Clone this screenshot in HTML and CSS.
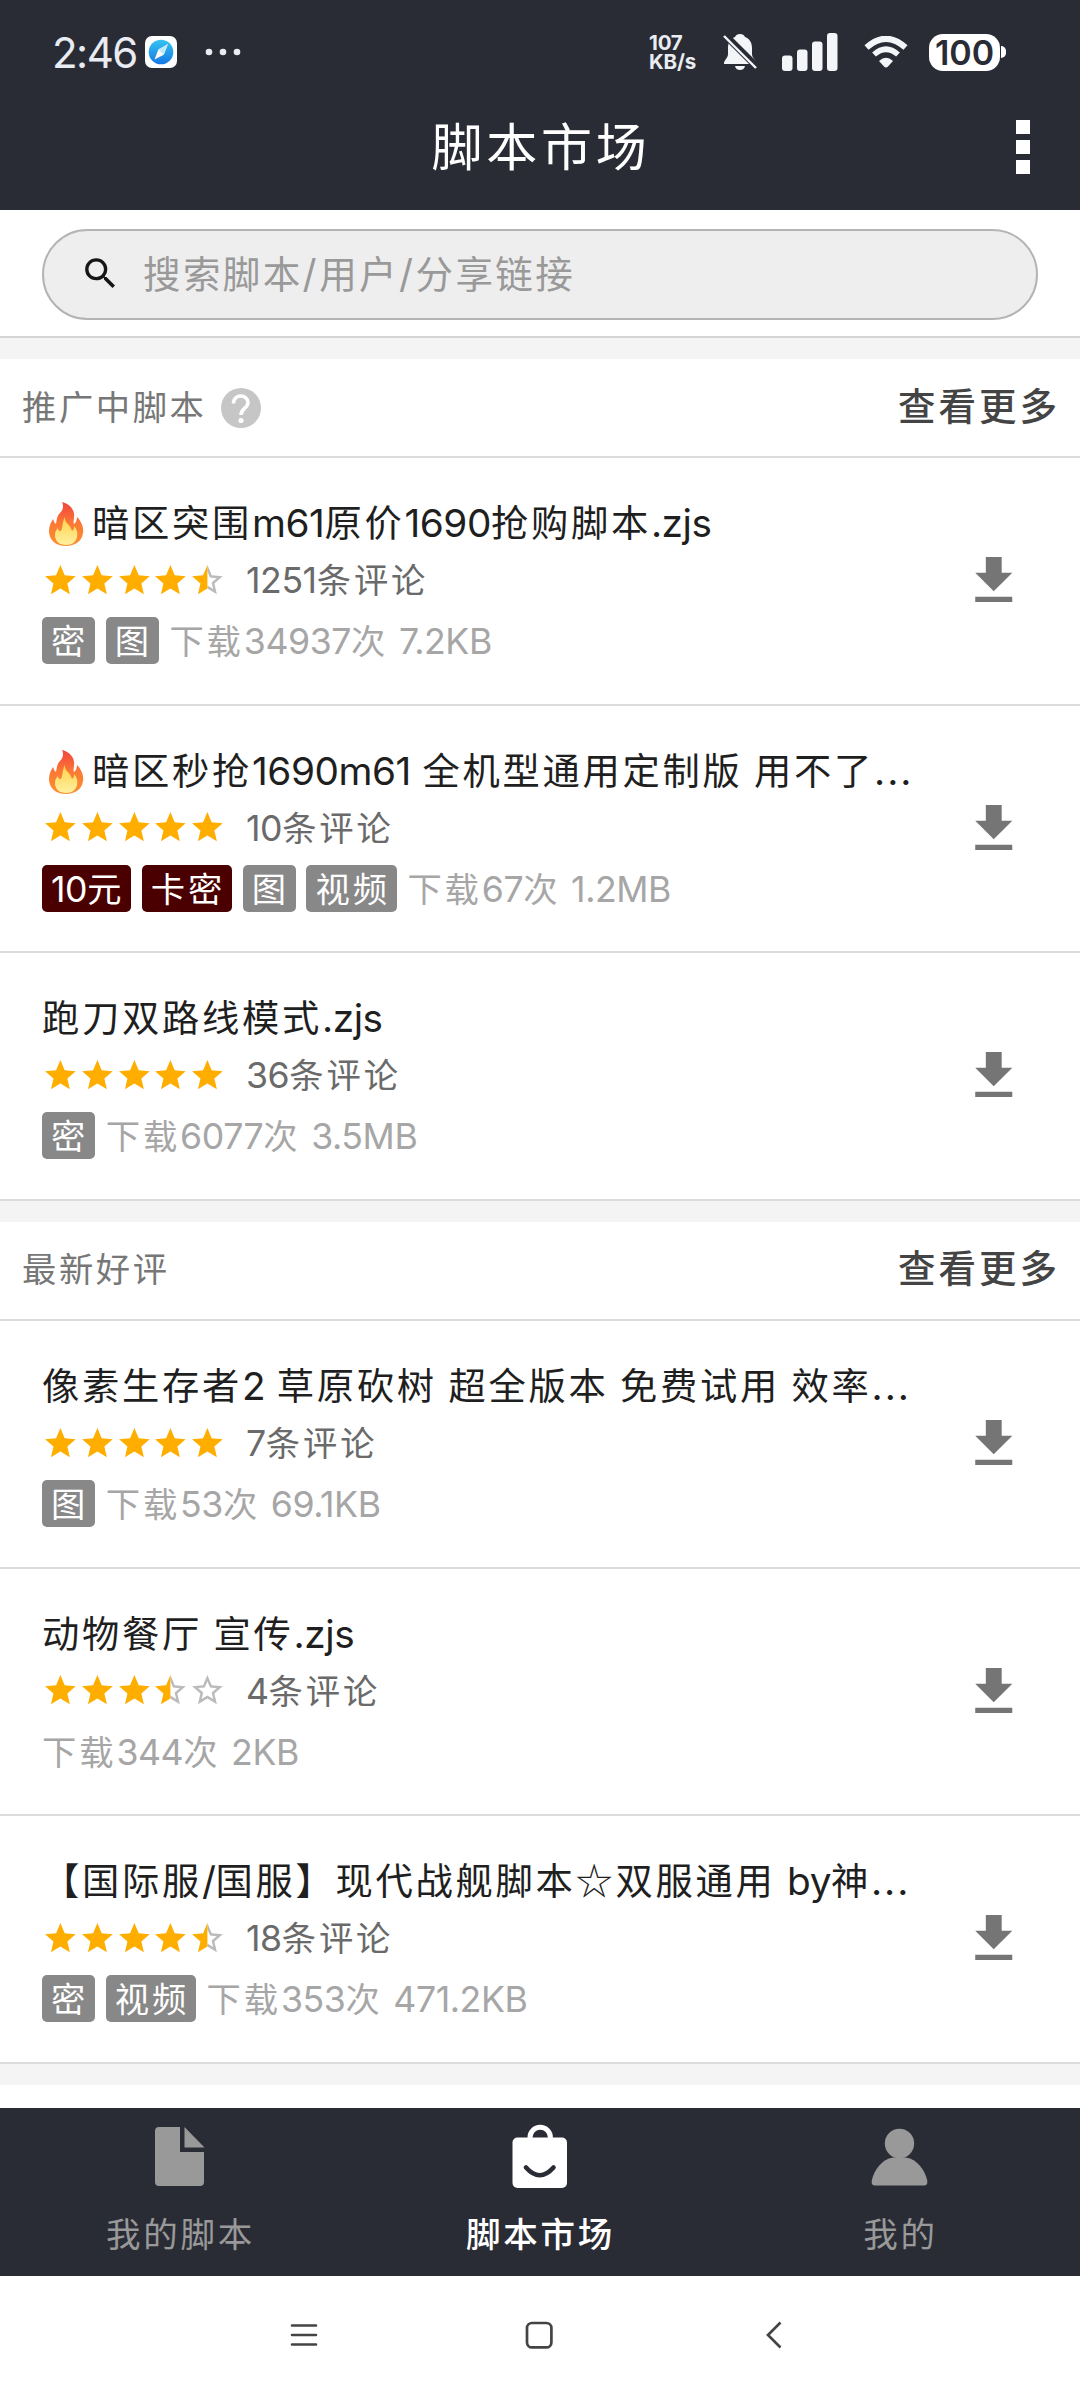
FILE: index.html
```html
<!DOCTYPE html>
<html lang="zh-CN">
<head>
<meta charset="utf-8">
<title>脚本市场</title>
<link rel="stylesheet" href="styles.css">
</head>
<body>
<svg width="0" height="0" class="defs">
  <defs>
    <symbol id="star" viewBox="0 0 24 24"><path d="M12 17.27 18.18 21l-1.64-7.03L22 9.24l-7.19-.61L12 2 9.19 8.63 2 9.24l5.46 4.73L5.82 21z" fill="#ffae00"/></symbol>
    <symbol id="star-empty" viewBox="0 0 24 24"><path d="M22 9.24l-7.19-.62L12 2 9.19 8.63 2 9.24l5.46 4.73L5.82 21 12 17.27 18.18 21l-1.63-7.03L22 9.24zM12 15.4l-3.76 2.27 1-4.28-3.32-2.88 4.38-.38L12 6.1l1.71 4.04 4.38.38-3.32 2.88 1 4.28L12 15.4z" fill="#bbb"/></symbol>
    <symbol id="star-half" viewBox="0 0 24 24"><path d="M22 9.24l-7.19-.62L12 2V6.1l1.71 4.04 4.38.38-3.32 2.88 1 4.28L12 15.4v1.87L18.18 21l-1.63-7.03L22 9.24z" fill="#bbb"/><path d="M12 17.27V2L9.19 8.63 2 9.24l5.46 4.73L5.82 21z" fill="#ffae00"/></symbol>
    <symbol id="download" viewBox="0 0 24 24"><path d="M19 9h-4V3H9v6H5l7 7 7-7zM5 18v2h14v-2H5z" fill="#757575"/></symbol>
    <linearGradient id="flame" x1="0" y1="0" x2="0" y2="1"><stop offset="0" stop-color="#f2443c"/><stop offset=".5" stop-color="#fb7a34"/><stop offset="1" stop-color="#f9902f"/></linearGradient>
    <linearGradient id="core" x1="0" y1="0" x2="0" y2="1"><stop offset="0" stop-color="#ffd34a"/><stop offset="1" stop-color="#fff0a0"/></linearGradient>
    <linearGradient id="sky" x1="0" y1="0" x2="0" y2="1"><stop offset="0" stop-color="#35c4f0"/><stop offset="1" stop-color="#1478e6"/></linearGradient>
    <symbol id="fire" viewBox="0 0 36 44"><path d="M14 0C22 2 27 8 26 15C26 18 25 20 26 22C28 21 29 18 29 15C33 19 36 25 35 31C34 39 27 44 18 44C8 44 1 38 1 29C1 24 3 20 5 17C6 19 6 21 8 22C9 17 9 14 12 11C15 8 16 4 14 0Z" fill="url(#flame)"/><path d="M17 15C16 21 23 23 24 29C26 28 26 26 26 24C29 27 30 31 29 35C28 40 24 43 18 43C11 43 7 39 7 33C7 30 8 28 10 26C10 28 11 29 13 29C15 25 14 20 17 15Z" fill="url(#core)"/></symbol>
  </defs>
</svg>

<header class="top">
  <div class="status">
    <div class="status-left">
      <span class="clock">2:46</span>
      <svg class="compass" width="32" height="32" viewBox="0 0 32 32"><rect width="32" height="32" rx="7" fill="#fff"/><circle cx="16" cy="16" r="12.3" fill="url(#sky)"/><path d="M23 8 18.8 18.8 9.5 23.5 13.4 13.4Z" fill="#fdfaf5"/><path d="M23 8 18.8 18.8 13.4 13.4Z" fill="#bfe8fa"/></svg>
      <svg width="36" height="8" viewBox="0 0 36 8" fill="#e9ecf2"><circle cx="4" cy="4" r="3.3"/><circle cx="18" cy="4" r="3.3"/><circle cx="32" cy="4" r="3.3"/></svg>
    </div>
    <div class="status-right">
      <div class="speed"><span>107</span><span>KB/s</span></div>
      <svg class="bell" width="36" height="38" viewBox="0 0 36 38" fill="#f4f5f8"><path d="M18 1c3 0 4.500 1.500 5 3 5 2 7 6 7 11v6c0 4 4 6 4 9v1H2v-1c0-3 4-5 4-9v-6c0-5 2-9 7-11 .5-1.500 2-3 5-3Z"/><path d="M13 33h10c-.5 2.500-2.300 4-5 4s-4.500-1.500-5-4Z"/><path d="M2 1 36 35" stroke="#2a2c35" stroke-width="7"/><path d="M2 3 34 35" stroke="#f4f5f8" stroke-width="2.400"/></svg>
      <svg class="signal" width="56" height="38" viewBox="0 0 56 38" fill="#f4f5f8"><rect y="22.500" width="10.500" height="15.500" rx="3"/><rect x="15" y="16.500" width="10.500" height="21.500" rx="3"/><rect x="30" y="8.500" width="10.500" height="29.500" rx="3"/><rect x="45" width="10.500" height="38" rx="3"/></svg>
      <svg class="wifi" width="44" height="32" viewBox="0 0 44 32"><path d="M2.500 11.500Q22-6 41.500 11.500" fill="none" stroke="#f4f5f8" stroke-width="6"/><path d="M10 18.500Q22 8 34 18.500" fill="none" stroke="#f4f5f8" stroke-width="5.600"/><path d="M15 25Q22 18.500 29 25L24 30.500Q22 32.500 20 30.500Z" fill="#f4f5f8"/></svg>
      <div class="battery"><span class="battery-body">100</span><span class="battery-tip"></span></div>
    </div>
  </div>
  <div class="titlebar">
    <h1>脚本市场</h1>
    <div class="more"><i></i><i></i><i></i></div>
  </div>
</header>

<div class="search-wrap">
  <div class="search">
    <svg width="41" height="41" viewBox="0 0 24 24"><path d="M15.500 14h-.79l-.28-.27A6.471 6.471 0 0 0 16 9.500 6.500 6.500 0 1 0 9.500 16c1.610 0 3.090-.59 4.230-1.570l.27.28v.79l5 4.990L20.490 19l-4.990-5zm-6 0C7.010 14 5 11.990 5 9.500S7.010 5 9.500 5 14 7.010 14 9.500 11.990 14 9.500 14z" fill="#161616"/></svg>
    <span>搜索脚本<b class="en">/</b>用户<b class="en">/</b>分享链接</span>
  </div>
</div>

<main>
  <section>
    <div class="section-head">
      <h2>推广中脚本</h2>
      <svg class="help" width="40" height="40" viewBox="0 0 40 40"><circle cx="20" cy="20" r="20" fill="#c6c6c6"/><path d="M12.500 15.500C12.500 5 27 6.500 27 14.500C27 20 20 20.500 20 27" fill="none" stroke="#fff" stroke-width="3.600"/><circle cx="20" cy="32.500" r="2.600" fill="#fff"/></svg>
      <a class="see-all">查看更多</a>
    </div>
    <article class="item">
      <div class="info">
        <h3><svg class="fire" width="36" height="44"><use href="#fire"/></svg>暗区突围<b class="en">m61</b>原价<b class="en">1690</b>抢购脚本<b class="en">.zjs</b></h3>
        <div class="rating"><span class="stars"><svg><use href="#star"/></svg><svg><use href="#star"/></svg><svg><use href="#star"/></svg><svg><use href="#star"/></svg><svg><use href="#star-half"/></svg></span><span class="reviews"><b class="en">1251</b>条评论</span></div>
        <div class="meta"><span class="tag">密</span><span class="tag">图</span><span class="stats">下载<b class="en">34937</b>次<b class="en"> 7.2KB</b></span></div>
      </div>
      <svg class="download"><use href="#download"/></svg>
    </article>
    <article class="item">
      <div class="info">
        <h3><svg class="fire" width="36" height="44"><use href="#fire"/></svg>暗区秒抢<b class="en">1690m61 </b>全机型通用定制版<b class="en"> </b>用不了<b class="en dots">...</b></h3>
        <div class="rating"><span class="stars"><svg><use href="#star"/></svg><svg><use href="#star"/></svg><svg><use href="#star"/></svg><svg><use href="#star"/></svg><svg><use href="#star"/></svg></span><span class="reviews"><b class="en">10</b>条评论</span></div>
        <div class="meta"><span class="tag paid"><b class="en">10</b>元</span><span class="tag paid">卡密</span><span class="tag">图</span><span class="tag">视频</span><span class="stats">下载<b class="en">67</b>次<b class="en"> 1.2MB</b></span></div>
      </div>
      <svg class="download"><use href="#download"/></svg>
    </article>
    <article class="item">
      <div class="info">
        <h3>跑刀双路线模式<b class="en">.zjs</b></h3>
        <div class="rating"><span class="stars"><svg><use href="#star"/></svg><svg><use href="#star"/></svg><svg><use href="#star"/></svg><svg><use href="#star"/></svg><svg><use href="#star"/></svg></span><span class="reviews"><b class="en">36</b>条评论</span></div>
        <div class="meta"><span class="tag">密</span><span class="stats">下载<b class="en">6077</b>次<b class="en"> 3.5MB</b></span></div>
      </div>
      <svg class="download"><use href="#download"/></svg>
    </article>
  </section>

  <section>
    <div class="section-head">
      <h2>最新好评</h2>
      <a class="see-all">查看更多</a>
    </div>
    <article class="item">
      <div class="info">
        <h3>像素生存者<b class="en">2 </b>草原砍树<b class="en"> </b>超全版本<b class="en"> </b>免费试用<b class="en"> </b>效率<b class="en dots">...</b></h3>
        <div class="rating"><span class="stars"><svg><use href="#star"/></svg><svg><use href="#star"/></svg><svg><use href="#star"/></svg><svg><use href="#star"/></svg><svg><use href="#star"/></svg></span><span class="reviews"><b class="en">7</b>条评论</span></div>
        <div class="meta"><span class="tag">图</span><span class="stats">下载<b class="en">53</b>次<b class="en"> 69.1KB</b></span></div>
      </div>
      <svg class="download"><use href="#download"/></svg>
    </article>
    <article class="item">
      <div class="info">
        <h3>动物餐厅<b class="en"> </b>宣传<b class="en">.zjs</b></h3>
        <div class="rating"><span class="stars"><svg><use href="#star"/></svg><svg><use href="#star"/></svg><svg><use href="#star"/></svg><svg><use href="#star-half"/></svg><svg><use href="#star-empty"/></svg></span><span class="reviews"><b class="en">4</b>条评论</span></div>
        <div class="meta"><span class="stats">下载<b class="en">344</b>次<b class="en"> 2KB</b></span></div>
      </div>
      <svg class="download"><use href="#download"/></svg>
    </article>
    <article class="item">
      <div class="info">
        <h3>【国际服<b class="en">/</b>国服】现代战舰脚本<span class="glyph-star">☆</span>双服通用<b class="en"> by</b>神<b class="en dots">...</b></h3>
        <div class="rating"><span class="stars"><svg><use href="#star"/></svg><svg><use href="#star"/></svg><svg><use href="#star"/></svg><svg><use href="#star"/></svg><svg><use href="#star-half"/></svg></span><span class="reviews"><b class="en">18</b>条评论</span></div>
        <div class="meta"><span class="tag">密</span><span class="tag">视频</span><span class="stats">下载<b class="en">353</b>次<b class="en"> 471.2KB</b></span></div>
      </div>
      <svg class="download"><use href="#download"/></svg>
    </article>
  </section>
  <section class="next"></section>
</main>

<nav class="tabs">
  <div class="tab">
    <svg width="72" height="72" viewBox="0 0 72 72" fill="#999"><path d="M15 6H36V31H60V61Q60 65 56 65H15Q11 65 11 61V10Q11 6 15 6Z"/><path d="M40.500 6 60.500 26.500H40.500Z"/></svg>
    <span>我的脚本</span>
  </div>
  <div class="tab active">
    <svg width="72" height="72" viewBox="0 0 72 72"><path d="M26 20V16.500A10.200 10.200 0 0 1 46.400 16.500V20" fill="none" stroke="#fff" stroke-width="5"/><rect x="8.500" y="16.500" width="54.500" height="50.500" rx="5" fill="#fff"/><path d="M22 46.500Q35.800 62 49.500 46.500" fill="none" stroke="#2a2c35" stroke-width="4.600" stroke-linecap="round"/></svg>
    <span>脚本市场</span>
  </div>
  <div class="tab">
    <svg width="72" height="72" viewBox="0 0 72 72" fill="#999"><circle cx="35.500" cy="22.500" r="14.700"/><path d="M29 36.500H42C53 38 61 49 63.200 59.500Q64 64.500 60 64.500H11Q7 64.500 7.800 59.500C10 49 18 38 29 36.500Z"/></svg>
    <span>我的</span>
  </div>
</nav>

<footer class="system">
  <svg width="28" height="28" viewBox="0 0 28 28" stroke="#444" stroke-width="2.600" stroke-linecap="round"><path d="M2 4.500H26M2 14H26M2 23.500H26"/></svg>
  <svg width="28" height="28" viewBox="0 0 28 28"><rect x="2" y="2" width="24.400" height="24.400" rx="5" fill="none" stroke="#444" stroke-width="2.700"/></svg>
  <svg width="28" height="28" viewBox="0 0 28 28"><path d="M20.500 1.500 8 14 20.500 26.500" fill="none" stroke="#444" stroke-width="2.700"/></svg>
</footer>
</body>
</html>
```
FILE: styles.css
```css
* { box-sizing: border-box; margin: 0; padding: 0; }
body {
  width: 1080px;
  height: 2400px;
  overflow: hidden;
  display: flex;
  flex-direction: column;
  background: #fff;
  color: #1f1f1f;
  font-family: "Noto Sans CJK SC", sans-serif;
}
svg { display: block; flex: none; }
.defs { position: absolute; }
h1, h2, h3, b { font-weight: 400; }

/* Latin letters and digits inside Chinese text */
.en {
  font-family: Inter, "Noto Sans CJK SC", sans-serif;
  font-size: 1.04em;
  letter-spacing: -0.012em;
  word-spacing: 0.03em;
  line-height: 1;
  white-space: pre;
}
.en.dots { letter-spacing: 0.05em; }

/* header */
.top { height: 210px; flex: none; background: #2a2c35; color: #fff; }
.status {
  height: 104px;
  padding: 0 74px 0 52px;
  display: flex;
  justify-content: space-between;
  align-items: center;
  font-family: Inter, sans-serif;
}
.status-left, .status-right { display: flex; align-items: center; }
.clock { font-size: 42px; letter-spacing: -1.5px; width: 93px; color: #e9ecf2; }
.compass { margin-right: 28px; }
.speed {
  display: flex;
  flex-direction: column;
  width: 73px;
  font-size: 20.500px;
  font-weight: 700;
  line-height: 19px;
  letter-spacing: -0.2px;
  color: #e9ecf2;
}
.bell { margin-right: 24px; }
.signal { margin-right: 26px; }
.wifi { margin-right: 21px; }
.battery { display: flex; align-items: center; gap: 1px; }
.battery-body {
  width: 71px;
  height: 37px;
  border-radius: 14px;
  background: #fff;
  color: #2a2c35;
  font-size: 34px;
  font-weight: 600;
  line-height: 37px;
  text-align: center;
}
.battery-tip { width: 5px; height: 12px; border-radius: 0 6px 6px 0; background: #fff; }
.titlebar { height: 86px; display: grid; grid-template-columns: 1fr auto 1fr; align-items: center; }
.titlebar h1 { grid-column: 2; font-size: 51px; letter-spacing: 3.700px; line-height: 80px; margin: -6px 0 0 2px; }
.more { justify-self: end; margin-right: 50px; display: grid; gap: 6px; }
.more i { width: 14px; height: 14px; background: #fff; }

/* search */
.search-wrap {
  height: 128px;
  flex: none;
  padding: 19px 42px 0;
  border-bottom: 2px solid #d5d5d5;
}
.search {
  height: 91px;
  padding: 0 0 7px 36px;
  display: flex;
  align-items: center;
  gap: 22px;
  border: 2px solid #b4b4b4;
  border-radius: 46px;
  background: #eee;
  color: #999;
  font-size: 37.500px;
  letter-spacing: 2.400px;
}
.search svg { margin-top: 5px; }
.search .en { letter-spacing: 2.500px; }

/* lists */
main { flex: 1; overflow: hidden; background: #f4f4f4; }
section { margin-top: 21px; background: #fff; }
section + section { margin-top: 21px; }
.section-head {
  height: 99px;
  padding: 0 20px 0 22px;
  display: flex;
  align-items: center;
  border-bottom: 2px solid #dcdcdc;
}
section + section .section-head { height: 99.500px; }
.section-head h2 { font-size: 34.300px; letter-spacing: 2.600px; line-height: 90px; color: #777; margin-top: -6px; }
.help { margin: 0 0 0 14px; }
.see-all { margin: -8px 0 0 auto; font-size: 37.500px; font-weight: 500; letter-spacing: 3px; line-height: 90px; color: #444; }
.item {
  height: 247.500px;
  padding: 35px 55px 0 42px;
  display: flex;
  justify-content: space-between;
  border-bottom: 2px solid #dcdcdc;
}
.item h3 {
  height: 56px;
  display: flex;
  align-items: baseline;
  font-size: 37.300px;
  letter-spacing: 2.700px;
  line-height: 56px;
  white-space: pre;
}
.fire { margin: 0 8px 0 6px; align-self: center; position: relative; top: 3px; }
.rating { height: 58px; display: flex; align-items: center; }
.stars { display: flex; margin-top: 4px; }
.stars svg { width: 36.800px; height: 36.800px; }
.reviews { margin-left: 20px; font-size: 34.300px; letter-spacing: 2.900px; line-height: 56px; color: #6a6a6a; }
.meta { height: 47px; margin-top: 10px; display: flex; align-items: center; gap: 10.500px; }
.tag {
  height: 47px;
  padding: 0 7px 0 9px;
  border-radius: 5px;
  background: #888;
  color: #fff;
  font-size: 34.300px;
  letter-spacing: 2.900px;
  line-height: 44px;
}
.tag.paid { background: #4a0000; }
.stats { font-size: 34.300px; letter-spacing: 2.900px; line-height: 45px; margin-top: -2px; color: #a6a6a6; }
.item .download { width: 63.500px; height: 63.500px; margin-top: 56px; }
.next { height: 100px; }

/* bottom tabs */
.tabs { height: 168px; flex: none; display: grid; grid-template-columns: repeat(3, 1fr); background: #2a2c35; }
.tab { display: flex; flex-direction: column; align-items: center; padding-top: 13px; color: #999; }
.tab span { font-size: 34.500px; letter-spacing: 2.800px; line-height: 50px; margin: 14px 0 0 1px; }
.tab.active { color: #fff; }
.tab.active span { font-weight: 500; }

/* system navigation */
.system { height: 124px; flex: none; display: flex; justify-content: center; gap: 207px; padding: 45px 3px 0 0; }
```
